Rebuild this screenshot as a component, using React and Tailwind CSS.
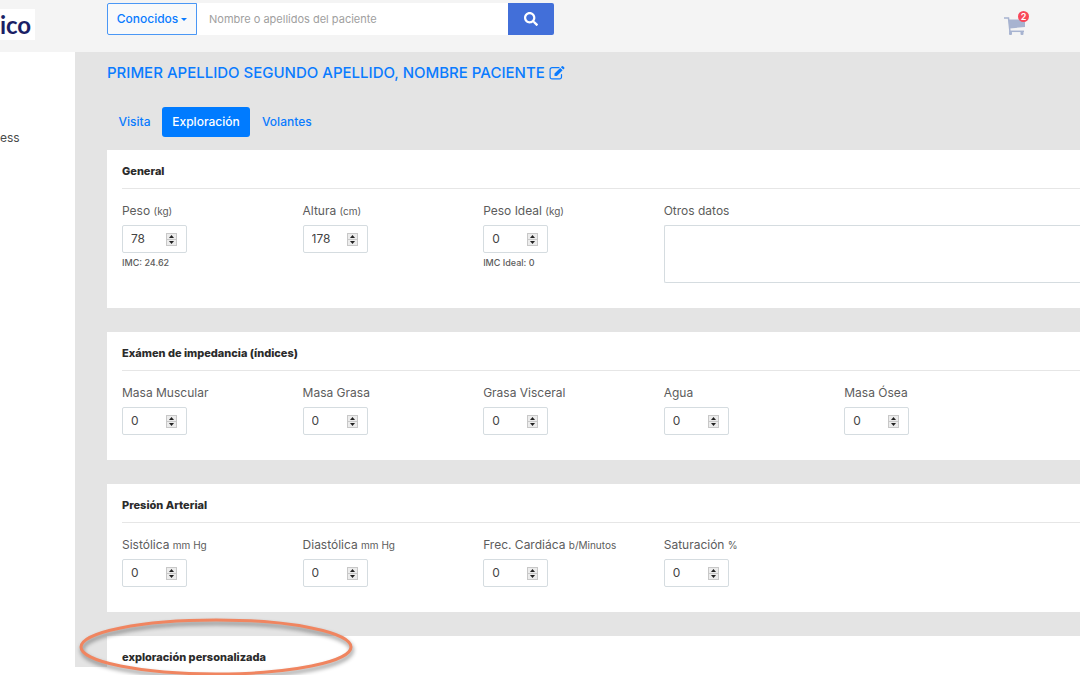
import { useState } from "react";
import { FaSearch } from "react-icons/fa";

function NumberField({ id, label, unit, initial = 0, note }) {
  const [value, setValue] = useState(initial);
  const step = (d) => setValue((v) => Number(v) + d);
  return (
    <div>
      <label htmlFor={id} className="block whitespace-nowrap text-xs leading-[18px]">
        {label} {unit && <span className="text-[10px]">{unit}</span>}
      </label>
      <div className="mt-[5px] flex h-7 w-[65px] items-center rounded-xs border border-[#d5dce0] bg-white pr-[9px] pl-2">
        <input
          id={id}
          type="number"
          value={value}
          onChange={(e) => setValue(e.target.value)}
          className="w-full min-w-0 appearance-none bg-transparent text-xs text-[#444] outline-none [-moz-appearance:textfield] [&::-webkit-inner-spin-button]:appearance-none"
        />
        <span className="flex w-[11px] shrink-0 flex-col border border-[#c8c8c8] bg-[#ececec]">
          <button type="button" aria-label={`Aumentar ${label}`} onClick={() => step(1)} className="flex h-[5px] items-center justify-center">
            <svg viewBox="0 0 5 3" className="h-[3px] w-[5px]"><path d="M0 3 2.500 0 5 3z" fill="#222" /></svg>
          </button>
          <button type="button" aria-label={`Disminuir ${label}`} onClick={() => step(-1)} className="flex h-1.5 items-center justify-center border-t border-[#c8c8c8]">
            <svg viewBox="0 0 5 3" className="h-[3px] w-[5px]"><path d="M0 0h5L2.500 3z" fill="#222" /></svg>
          </button>
        </span>
      </div>
      {note && <p className="mt-0.5 text-[9px] leading-4 font-medium">{note}</p>}
    </div>
  );
}

function Card({ title, children }) {
  return (
    <section className="bg-white pb-[25px] pl-[15px]">
      <h2 className="border-b border-[#e6e6e6] pt-3 pb-2 text-[11px] leading-[18px] font-extrabold text-[#2b2b2b]">{title}</h2>
      <div className="mt-[13px] grid grid-cols-[repeat(5,180fr)_55fr]">{children}</div>
    </section>
  );
}

function EditIcon() {
  return (
    <svg viewBox="0 0 16 16" className="size-4">
      <path d="M10 2.700H3A1.900 1.900 0 0 0 1.100 4.600V12A1.900 1.900 0 0 0 3 13.900H10.600A1.900 1.900 0 0 0 12.500 12V9.500" fill="none" stroke="currentColor" strokeWidth="1.200" strokeLinecap="round" />
      <path d="M5.500 8.600 11.200 2.900 13.600 5.300 7.900 11H5.500zM11.900 2.200 12.900 1.200Q13.500.7 14.100 1.200L15.300 2.400Q15.800 3 15.300 3.600L14.300 4.600z" fill="currentColor" />
    </svg>
  );
}

export default function App() {
  return (
    <div className="relative min-h-screen overflow-hidden bg-white font-['Inter','Noto_Sans',sans-serif] text-[#5c5c5c]">
      <header className="flex h-[52px] items-start bg-[#f4f4f4]">
        <div className="w-[107px] shrink-0 pt-[9px]">
          <a href="#" className="flex h-[31px] w-[35px] items-center justify-center bg-white pr-1 font-['Lato',sans-serif] text-2xl leading-[31px] font-bold text-[#1b1f66]">ico</a>
        </div>
        <form className="mt-[3px] flex h-8 w-[447px]" onSubmit={(e) => e.preventDefault()}>
          <button type="button" className="flex w-[90px] shrink-0 items-center justify-center gap-[3px] rounded-l-xs border border-[#4a97f5] bg-[#f8f9fa] text-xs font-medium text-[#0a7bff]">
            Conocidos
            <svg viewBox="0 0 6 3" className="h-[3px] w-1.5"><path d="M0 0h6L3 3z" fill="currentColor" /></svg>
          </button>
          <input aria-label="Buscar paciente" placeholder="Nombre o apellidos del paciente" className="min-w-0 flex-1 bg-white px-3 text-[11px] outline-none placeholder:text-[#a0a0a0]" />
          <button type="submit" aria-label="Buscar" className="flex w-[46px] shrink-0 items-center justify-center rounded-r-xs bg-[#426fd9] text-white">
            <FaSearch className="size-3.5" />
          </button>
        </form>
        <a href="#" aria-label="Carrito" className="relative mt-4 mr-[54px] ml-auto block">
          <svg viewBox="0 0 22 20" className="h-5 w-[22px]" fill="none" stroke="#a7b3d0">
            <path d="M0 2h4.500l1.500 14" strokeWidth="1.500" />
            <path d="M4.500 3.500h16.500v7.500l-15.500 1.500z" fill="#a7b3d0" stroke="none" />
            <path d="M5.500 15.300h14.500" strokeWidth="1.500" />
            <rect x="5" y="15.500" width="3" height="3.500" rx="1" fill="#a7b3d0" stroke="none" />
            <rect x="16.500" y="15.500" width="3" height="3.500" rx="1" fill="#a7b3d0" stroke="none" />
          </svg>
          <span className="absolute -top-[5px] -right-[3px] flex size-[11px] items-center justify-center rounded-full bg-[#f8485a] text-[9px] leading-none font-semibold text-white">2</span>
        </a>
      </header>

      <div className="flex">
        <aside className="w-[75px] shrink-0 bg-white pt-[77px]">
          <a href="#" className="block text-xs leading-[18px] text-[#4a4a4a]">ess</a>
        </aside>
        <main className="min-w-0 flex-1 bg-[#e4e4e4] pl-8">
          <h1 className="flex items-center gap-1 pt-[9px] text-[15px] leading-6 font-medium whitespace-nowrap text-[#0a7bff]">
            PRIMER APELLIDO SEGUNDO APELLIDO, NOMBRE PACIENTE
            <a href="#" aria-label="Editar paciente"><EditIcon /></a>
          </h1>
          <nav className="mt-[22px] mb-[13px] flex h-[30px] items-stretch text-xs font-medium text-[#0a7bff]">
            <a href="#" className="flex w-[55px] items-center justify-center">Visita</a>
            <a href="#" aria-current="page" className="flex w-[88px] items-center justify-center rounded-[3px] bg-[#007bff] text-white">Exploración</a>
            <a href="#" className="flex items-center px-3">Volantes</a>
          </nav>
          <div className="flex flex-col gap-6">
            <Card title="General">
              <NumberField id="peso" label="Peso" unit="(kg)" initial={78} note="IMC: 24.62" />
              <NumberField id="altura" label="Altura" unit="(cm)" initial={178} />
              <NumberField id="ideal" label="Peso Ideal" unit="(kg)" note="IMC Ideal: 0" />
              <div className="col-span-3">
                <label htmlFor="otros" className="block text-xs leading-[18px]">Otros datos</label>
                <textarea id="otros" className="mt-[5px] block h-[58px] w-full resize-none rounded-l-xs border border-r-0 border-[#d5dce0] bg-white p-2 text-xs outline-none" />
              </div>
            </Card>
            <Card title="Exámen de impedancia (índices)">
              <NumberField id="muscular" label="Masa Muscular" />
              <NumberField id="grasa" label="Masa Grasa" />
              <NumberField id="visceral" label="Grasa Visceral" />
              <NumberField id="agua" label="Agua" />
              <NumberField id="osea" label="Masa Ósea" />
            </Card>
            <Card title="Presión Arterial">
              <NumberField id="sistolica" label="Sistólica" unit="mm Hg" />
              <NumberField id="diastolica" label="Diastólica" unit="mm Hg" />
              <NumberField id="frecuencia" label="Frec. Cardiáca" unit="b/Minutos" />
              <NumberField id="saturacion" label="Saturación" unit="%" />
            </Card>
            <section className="relative bg-white pt-3 pb-px pl-[15px]">
              <h2 className="text-[11px] leading-[18px] font-extrabold text-[#2b2b2b]">exploración personalizada</h2>
              <svg viewBox="0 0 280 66" className="pointer-events-none absolute -top-5 -left-[30px] h-[66px] w-[280px] drop-shadow-[1px_3px_2px_rgba(0,0,0,0.45)]">
                <ellipse cx="139" cy="31" rx="135" ry="27" fill="none" stroke="#f08560" strokeWidth="3" />
              </svg>
            </section>
          </div>
        </main>
      </div>
    </div>
  );
}
